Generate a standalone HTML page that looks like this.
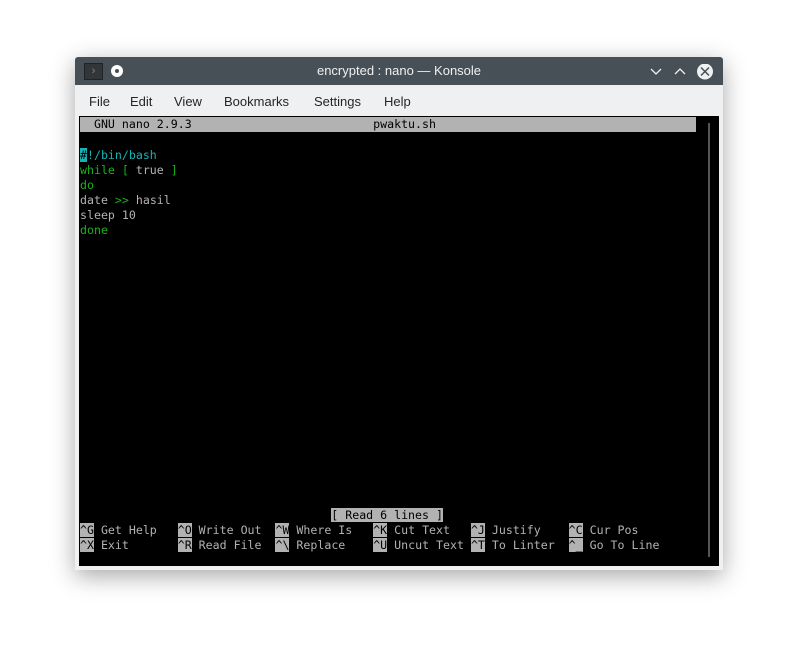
<!DOCTYPE html>
<html><head><style>
body{margin:0;background:#fff;width:798px;height:663px;position:relative;overflow:hidden;font-family:"Liberation Sans",sans-serif}
.win{position:absolute;left:75px;top:57px;width:648px;height:513px;box-shadow:0 6px 24px rgba(0,0,0,.35);background:#eff0f1;border-radius:3px 3px 0 0}
.tb{position:absolute;left:0;top:0;width:648px;height:28px;background:#475057;border-radius:3px 3px 0 0;color:#eff0f1;font-size:13px;text-align:center;line-height:28px}
.menu{position:absolute;top:29px;left:0;height:32px;font-size:13px;color:#232627;line-height:32px}
.menu span{position:absolute;white-space:nowrap}
.term{position:absolute;left:4px;top:59px;width:640px;height:450px;background:#000}
.r{position:absolute;left:1px;font-family:"DejaVu Sans Mono","Liberation Mono",monospace;font-size:11.6px;line-height:15px;height:15px;white-space:pre;color:#b2b2b2}
.g{color:#18b218}.c{color:#18b2b2}.h{background:#b2b2b2;color:#000}
</style></head><body>
<div class="win">
<div class="tb">encrypted : nano — Konsole
<div style="position:absolute;left:9px;top:6px;width:17px;height:15px;background:#31363b;border:1px solid #222;color:#888;font-size:11px;line-height:15px">›</div>
<div style="position:absolute;left:36px;top:8px;width:12px;height:12px;border-radius:50%;background:#fff"><div style="position:absolute;left:4px;top:4px;width:4px;height:4px;border-radius:50%;background:#475057"></div></div>
<svg style="position:absolute;left:574px;top:7px" width="64" height="16"><path d="M2 5l5 5 5-5M26 10l5-5 5 5" stroke="#eff0f1" stroke-width="1.3" fill="none"/><circle cx="56" cy="7.5" r="8" fill="#eff0f1"/><path d="M52 3.5l8 8M60 3.5l-8 8" stroke="#475057" stroke-width="1.5"/></svg>
</div>
<div class="menu"><span style="left:14px">File</span><span style="left:55px">Edit</span><span style="left:99px">View</span><span style="left:149px">Bookmarks</span><span style="left:239px">Settings</span><span style="left:309px">Help</span></div>
<div class="term">
<div style="position:absolute;left:629px;top:7px;width:2px;height:434px;background:#555"></div>
<div class="r" style="top:1px;width:616px;background:#b2b2b2;color:#000">  GNU nano 2.9.3                          pwaktu.sh</div>
<div class="r c" style="top:32px"><span style="background:#18b2b2;color:#000">#</span>!/bin/bash</div>
<div class="r" style="top:47px"><span class="g">while [ </span>true<span class="g"> ]</span></div>
<div class="r g" style="top:62px">do</div>
<div class="r" style="top:77px">date <span class="g">&gt;&gt;</span> hasil</div>
<div class="r" style="top:92px">sleep 10</div>
<div class="r g" style="top:107px">done</div>
<div class="r" style="top:392px">                                    <span class="h">[ Read 6 lines ]</span></div>
<div class="r" style="top:407px"><span class="h">^G</span> Get Help   <span class="h">^O</span> Write Out  <span class="h">^W</span> Where Is   <span class="h">^K</span> Cut Text   <span class="h">^J</span> Justify    <span class="h">^C</span> Cur Pos</div>
<div class="r" style="top:422px"><span class="h">^X</span> Exit       <span class="h">^R</span> Read File  <span class="h">^\</span> Replace    <span class="h">^U</span> Uncut Text <span class="h">^T</span> To Linter  <span class="h">^_</span> Go To Line</div>
</div>
</div>
</body></html>
